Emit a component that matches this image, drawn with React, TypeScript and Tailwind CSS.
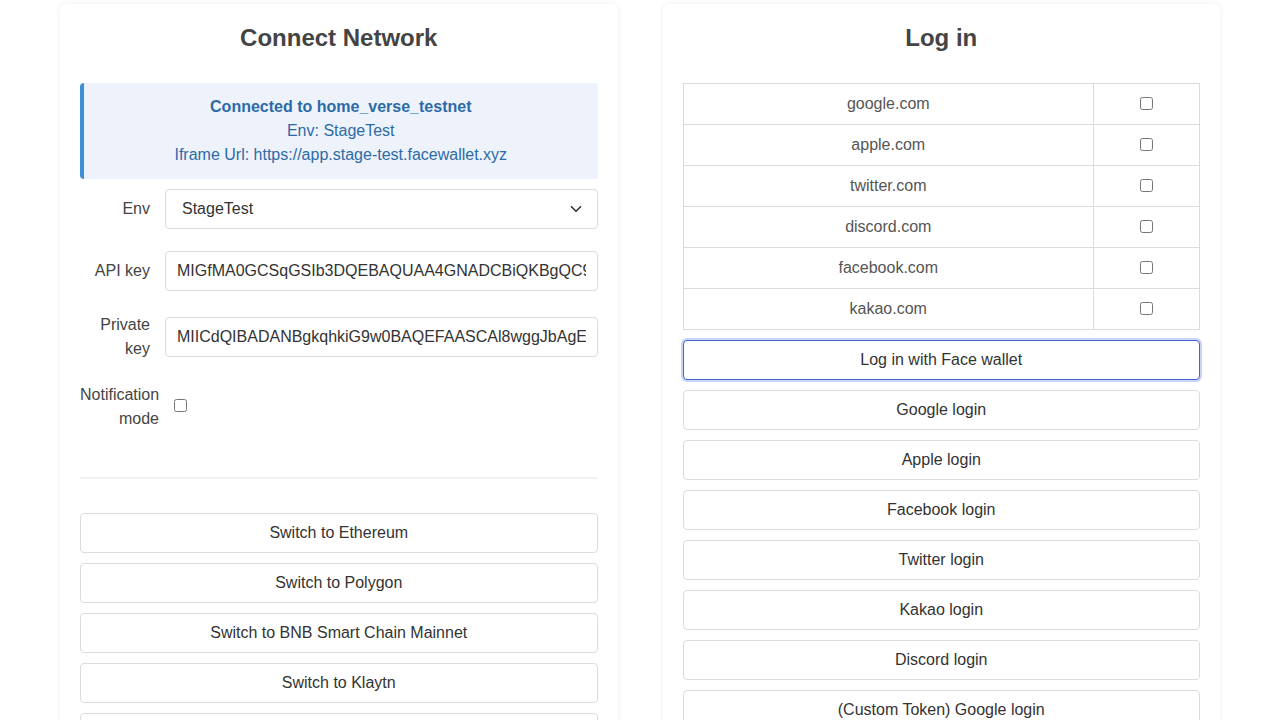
import { ChevronDown } from "lucide-react";

const providers = ["google.com", "apple.com", "twitter.com", "discord.com", "facebook.com", "kakao.com"];

const networkButtons = [
  "Switch to Ethereum",
  "Switch to Polygon",
  "Switch to BNB Smart Chain Mainnet",
  "Switch to Klaytn",
  "Switch to Home Verse",
];

const loginButtons = [
  "Google login",
  "Apple login",
  "Facebook login",
  "Twitter login",
  "Kakao login",
  "Discord login",
  "(Custom Token) Google login",
];

function OutlineButton({ label, focused }: { label: string; focused?: boolean }) {
  return (
    <button
      className={
        "h-10 w-full rounded-[4px] border bg-white text-base text-[#333] " +
        (focused ? "border-[#4a63d8] ring-2 ring-[#c9d3f5]" : "border-[#dcdcdc]")
      }
    >
      {label}
    </button>
  );
}

export default function App() {
  return (
    <main
      className="h-[720px] overflow-hidden bg-white"
      style={{ fontFamily: '"Liberation Sans", Arial, sans-serif' }}
    >
      <div className="grid grid-cols-2 gap-[45px] px-[60px] pt-[4px]">
        {/* Connect Network */}
        <section className="rounded-md bg-white px-5 pb-10 pt-5 shadow-[0_0_6px_rgba(0,0,0,0.08)]">
          <h2 className="text-center text-2xl font-bold leading-7 text-[#444]">Connect Network</h2>

          <div className="mt-[31px] rounded-[4px] border-l-4 border-[#3d8fd6] bg-[#eef3fb] py-3 text-center text-base leading-6 text-[#2c6aa8]">
            <div className="font-bold">Connected to home_verse_testnet</div>
            <div>Env: StageTest</div>
            <div>Iframe Url: https://app.stage-test.facewallet.xyz</div>
          </div>

          <div className="mt-[10px] flex items-center">
            <label className="w-[85px] shrink-0 pr-[15px] text-right text-base text-[#444]">Env</label>
            <div className="flex h-10 flex-1 items-center justify-between rounded-[4px] border border-[#dcdcdc] pl-4 pr-3 text-base text-[#333]">
              <span>StageTest</span>
              <ChevronDown size={18} strokeWidth={2.2} className="text-[#333]" />
            </div>
          </div>

          <div className="mt-[22px] flex items-center">
            <label className="w-[85px] shrink-0 pr-[15px] text-right text-base text-[#444]">API key</label>
            <input
              readOnly
              value="MIGfMA0GCSqGSIb3DQEBAQUAA4GNADCBiQKBgQC9xbk"
              className="h-10 min-w-0 flex-1 rounded-[4px] border border-[#dcdcdc] px-[11px] text-base text-[#333] outline-none"
            />
          </div>

          <div className="mt-[22px] flex items-center">
            <label className="w-[85px] shrink-0 pr-[15px] text-right text-base leading-6 text-[#444]">
              Private key
            </label>
            <input
              readOnly
              value="MIICdQIBADANBgkqhkiG9w0BAQEFAASCAl8wggJbAgEAAoGBA"
              className="h-10 min-w-0 flex-1 rounded-[4px] border border-[#dcdcdc] px-[11px] text-base text-[#333] outline-none"
            />
          </div>

          <div className="mt-[22px] flex items-center">
            <label className="w-[85px] shrink-0 pr-[6px] text-right text-base leading-6 text-[#444]">
              Notification mode
            </label>
            <input type="checkbox" className="mb-[3px] ml-[9px] h-[13px] w-[13px]" />
          </div>

          <hr className="mt-[46px] border-t-2 border-[#f2f2f2]" />

          <div className="mt-[34px] flex flex-col gap-[10px]">
            {networkButtons.map((b) => (
              <OutlineButton key={b} label={b} />
            ))}
          </div>
        </section>

        {/* Log in */}
        <section className="rounded-md bg-white px-5 pb-10 pt-5 shadow-[0_0_6px_rgba(0,0,0,0.08)]">
          <h2 className="text-center text-2xl font-bold leading-7 text-[#444]">Log in</h2>

          <table className="mt-[31px] w-full border-collapse text-base text-[#555]">
            <tbody>
              {providers.map((p) => (
                <tr key={p} className="h-[41px]">
                  <td className="border border-[#dcdcdc] text-center">{p}</td>
                  <td className="w-[106px] border border-[#dcdcdc] text-center">
                    <input type="checkbox" className="mb-[3px] h-[13px] w-[13px] align-middle" />
                  </td>
                </tr>
              ))}
            </tbody>
          </table>

          <div className="mt-[10px] flex flex-col gap-[10px]">
            <OutlineButton label="Log in with Face wallet" focused />
            {loginButtons.map((b) => (
              <OutlineButton key={b} label={b} />
            ))}
          </div>
        </section>
      </div>
    </main>
  );
}
